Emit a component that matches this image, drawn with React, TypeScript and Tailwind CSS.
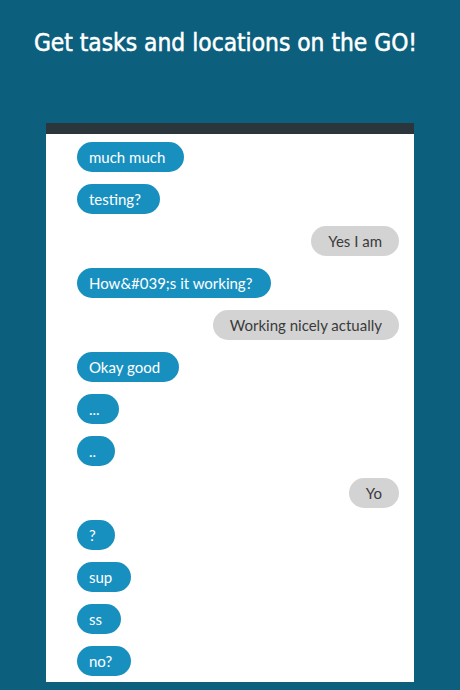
const messages: { text: string; mine: boolean }[] = [
  { text: 'much much', mine: false },
  { text: 'testing?', mine: false },
  { text: 'Yes I am', mine: true },
  { text: 'How&#039;s it working?', mine: false },
  { text: 'Working nicely actually', mine: true },
  { text: 'Okay good', mine: false },
  { text: '...', mine: false },
  { text: '..', mine: false },
  { text: 'Yo', mine: true },
  { text: '?', mine: false },
  { text: 'sup', mine: false },
  { text: 'ss', mine: false },
  { text: 'no?', mine: false },
];

export default function App() {
  return (
    <div className="w-[460px] h-[690px] overflow-hidden bg-[#0c5f7d] flex flex-col items-center">
      <h1 className="mt-[28px] mr-[9px] text-white text-[24.3px] leading-[30px] [-webkit-text-stroke:0.5px_white] font-['DejaVu_Sans_Condensed','DejaVu_Sans',sans-serif]">
        Get tasks and locations on the GO!
      </h1>
      <div className="mt-[65px] w-[368px] h-[559px] flex flex-col">
        <div className="h-[11px] bg-[#2b363c]" />
        <div className="flex-1 bg-white flex flex-col gap-3 pt-[8px] pl-[31px] pr-[15px] font-['Lato',sans-serif] text-[15px]">
          {messages.map((m, i) => (
            <div key={i} className={m.mine ? 'flex justify-end' : 'flex justify-start'}>
              <span
                className={
                  m.mine
                    ? 'h-[30px] leading-[30px] rounded-full bg-[#d3d3d3] text-[#3b3b3b] px-[17px]'
                    : 'h-[30px] leading-[30px] rounded-full bg-[#1890bf] text-white pl-3 pr-[19px]'
                }
              >
                {m.text}
              </span>
            </div>
          ))}
        </div>
      </div>
    </div>
  );
}
